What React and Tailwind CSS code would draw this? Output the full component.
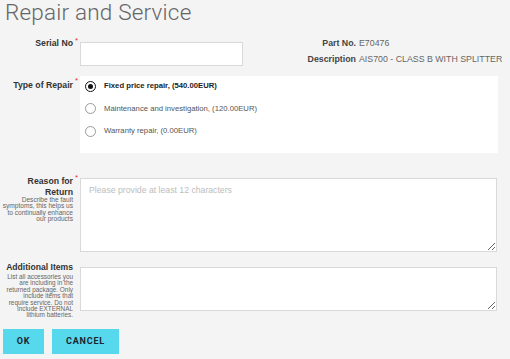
import { useState } from 'react';

const repairOptions = [
    { id: 'fixed', label: 'Fixed price repair, (540.00EUR)' },
    { id: 'maint', label: 'Maintenance and investigation, (120.00EUR)' },
    { id: 'warranty', label: 'Warranty repair, (0.00EUR)' }
];

const Star = () => (
    <div className="w-[7px] pl-[2px] -mt-[6px] text-[8px] leading-[10px] text-[#e0323a]">*</div>
);

const Radio = ({ checked }) => (
    <span
        className={`flex items-center justify-center w-[11px] h-[11px] rounded-full border bg-white ${checked ? 'border-[#111]' : 'border-[#9a9a9a]'}`}
    >
        {checked && <span className="w-[5px] h-[5px] rounded-full bg-[#111]" />}
    </span>
);

const RepairForm = () => {
    const [repairType, setRepairType] = useState('fixed');

    return (
        <div className="w-[510px] h-[359px] overflow-hidden bg-[#f4f4f4] font-['Liberation_Sans',Arial,sans-serif] text-[#333]">
            <h1 className="pl-[5px] font-['Roboto',sans-serif] text-[22.5px] leading-[24px] font-light tracking-[0.2px] text-[#666]">
                Repair and Service
            </h1>

            {/* Serial No + part info */}
            <div className="flex items-start h-[24px] mt-[18px]">
                <div className="w-[73px] -mt-[4px] text-right text-[8.7px] leading-[11px] font-bold text-[#333]">Serial No</div>
                <Star />
                <input type="text" className="w-[163px] h-[24px] bg-white border border-[#d9d9d9] outline-none" />
                <div className="grid grid-cols-[113px_1fr] gap-x-[3px] -mt-[7px] text-[8.8px] leading-[16px] text-[#666]">
                    <span className="text-right font-bold text-[#444]">Part No.</span>
                    <span>E70476</span>
                    <span className="text-right font-bold text-[#444]">Description</span>
                    <span className="whitespace-nowrap">AIS700 - CLASS B WITH SPLITTER</span>
                </div>
            </div>

            {/* Type of repair */}
            <div className="flex items-start h-[77px] mt-[10px]">
                <div className="w-[73px] mt-[4px] text-right text-[8.7px] leading-[11px] font-bold">Type of Repair</div>
                <div className="w-[7px] pl-[2px] text-[8px] leading-[10px] text-[#e0323a]">*</div>
                <div className="flex flex-col gap-[2.5px] w-[418px] h-[77px] bg-white pl-[5px]">
                    {repairOptions.map((opt) => (
                        <label
                            key={opt.id}
                            onClick={() => setRepairType(opt.id)}
                            className={`flex items-center gap-[8px] h-[20px] text-[7.7px] cursor-pointer ${repairType === opt.id ? 'font-bold text-[#222]' : 'text-[#555]'}`}
                        >
                            <Radio checked={repairType === opt.id} />
                            <span>{opt.label}</span>
                        </label>
                    ))}
                </div>
            </div>

            {/* Reason for return */}
            <div className="flex items-start h-[74px] mt-[25px]">
                <div className="w-[73px] -mt-[2.5px] text-right">
                    <div className="text-[8.7px] leading-[11px] font-bold">Reason for<br />Return</div>
                    <div className="-mt-[1px] text-[6.6px] leading-[6.5px] text-[#666]">
                        Describe the fault<br />
                        symptoms, this helps us<br />
                        to continually enhance<br />
                        our products
                    </div>
                </div>
                <div className="w-[7px] pl-[2px] -mt-[5px] text-[8px] leading-[10px] text-[#e0323a]">*</div>
                <textarea
                    placeholder="Please provide at least 12 characters"
                    className="w-[417px] h-[74px] bg-white border border-[#d9d9d9] px-[8px] py-[6px] text-[8.7px] leading-[11px] placeholder:text-[#bdbdbd] outline-none"
                />
            </div>

            {/* Additional items */}
            <div className="flex items-start h-[44px] mt-[15px]">
                <div className="w-[73px] -mt-[5px] text-right">
                    <div className="text-[8.6px] leading-[11px] font-bold">Additional Items</div>
                    <div className="mt-[1px] text-[6.4px] leading-[6.4px] text-[#666]">
                        List all accessories you<br />
                        are including in the<br />
                        returned package. Only<br />
                        include items that<br />
                        require service. Do not<br />
                        include EXTERNAL<br />
                        lithium batteries.
                    </div>
                </div>
                <div className="w-[7px]" />
                <textarea className="w-[417px] h-[44px] bg-white border border-[#d9d9d9] outline-none" />
            </div>

            {/* Actions */}
            <div className="flex gap-[8px] mt-[18px] pl-[3px]">
                <button className="w-[41px] h-[25px] bg-[#56d8ed] font-['Roboto',sans-serif] text-[9px] font-bold tracking-[0.8px] text-[#1c2530]">
                    OK
                </button>
                <button className="w-[67px] h-[25px] bg-[#56d8ed] font-['Roboto',sans-serif] text-[9px] font-bold tracking-[0.8px] text-[#1c2530]">
                    CANCEL
                </button>
            </div>
        </div>
    );
};

export default function App() {
    return <RepairForm />;
}
